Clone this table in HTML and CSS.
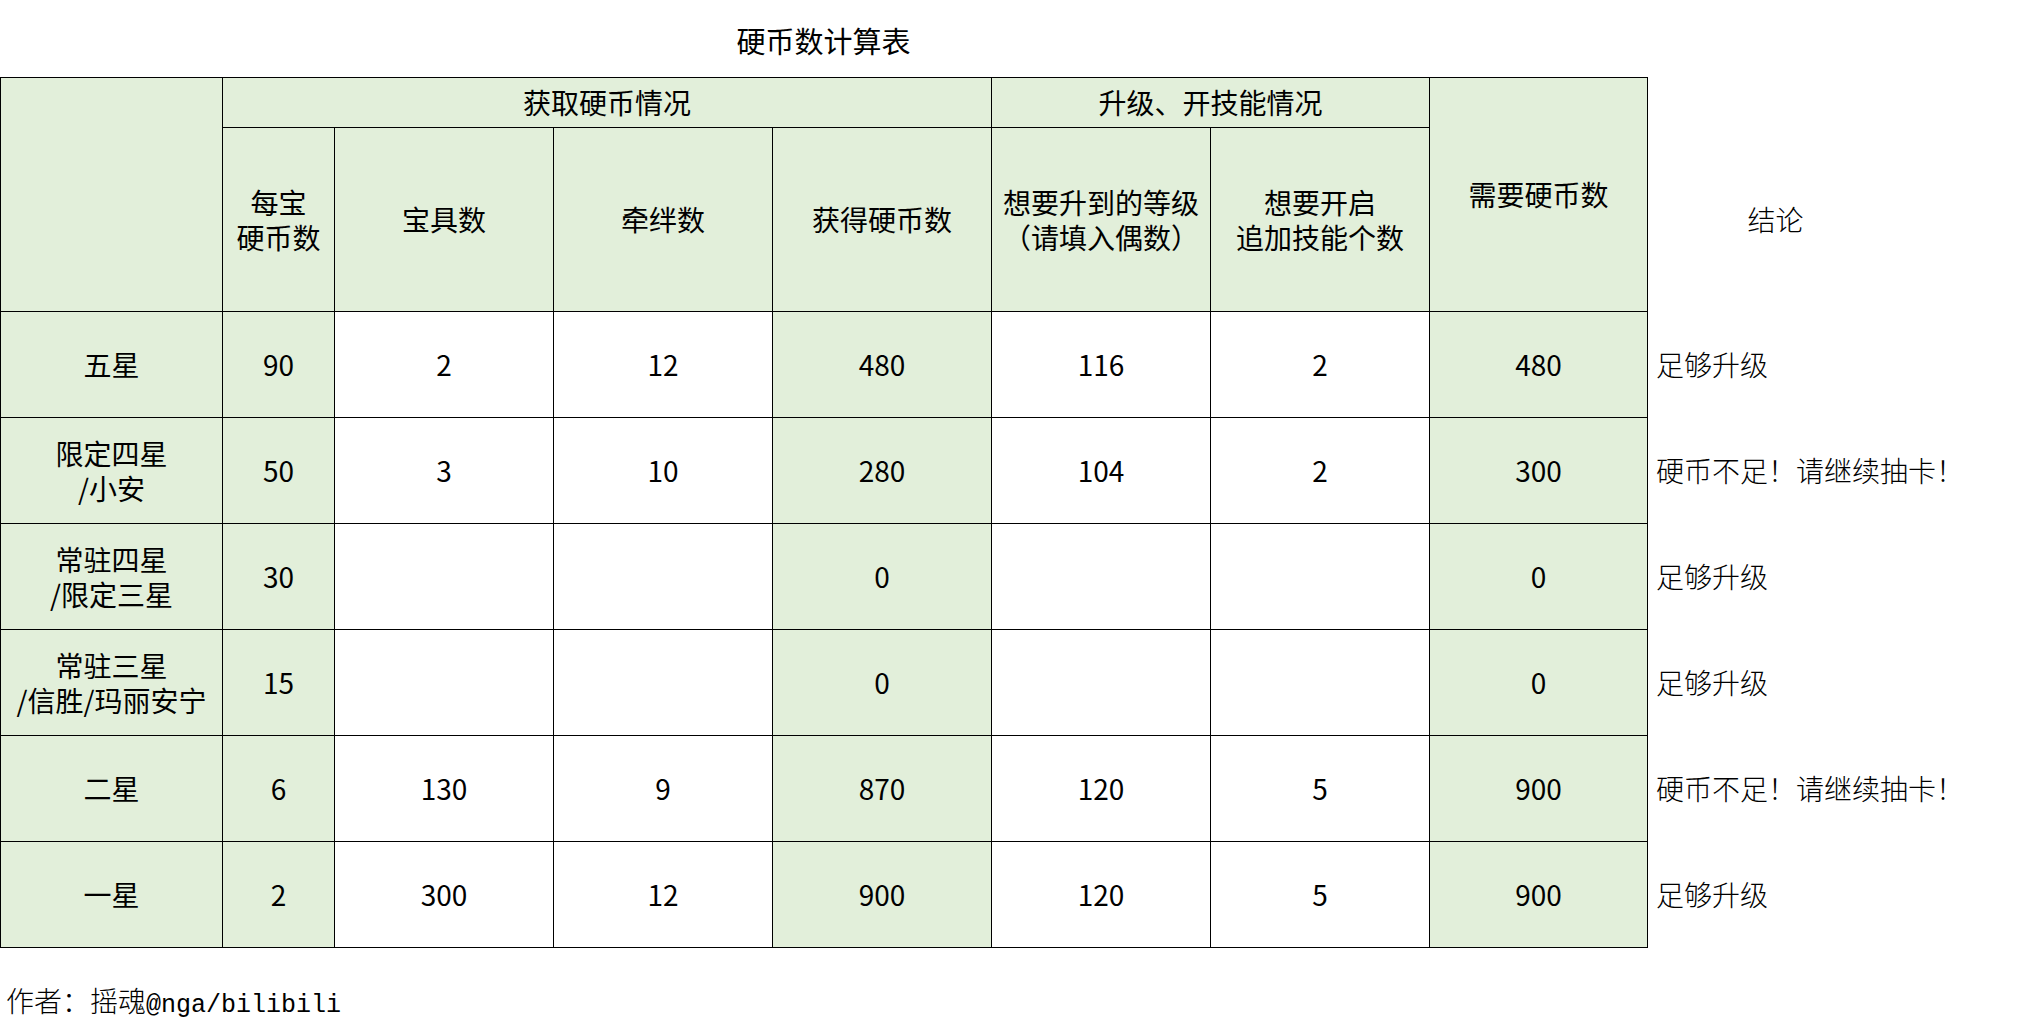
FILE: index.html
```html
<!DOCTYPE html>
<html lang="zh-CN">
<head>
<meta charset="utf-8">
<title>硬币数计算表</title>
<link rel="stylesheet" href="styles.css">
</head>
<body>
<div class="sheet">
  <div class="title">硬币数计算表</div>
  <table class="grid">
    <colgroup>
      <col class="w-label">
      <col class="w-per">
      <col class="w-std">
      <col class="w-std">
      <col class="w-std">
      <col class="w-std">
      <col class="w-std">
      <col class="w-need">
      <col class="w-note">
    </colgroup>
    <tr class="h1">
      <td class="b g" rowspan="2"></td>
      <td class="b g" colspan="4">获取硬币情况</td>
      <td class="b g" colspan="2">升级、开技能情况</td>
      <td class="b g" rowspan="2">需要硬币数</td>
      <td class="free"></td>
    </tr>
    <tr class="h2">
      <td class="b g">每宝<br>硬币数</td>
      <td class="b g">宝具数</td>
      <td class="b g">牵绊数</td>
      <td class="b g">获得硬币数</td>
      <td class="b g">想要升到的等级<br>（请填入偶数）</td>
      <td class="b g">想要开启<br>追加技能个数</td>
      <td class="free head-note">结论</td>
    </tr>
    <tr class="row">
      <td class="b g">五星</td>
      <td class="b g">90</td>
      <td class="b">2</td>
      <td class="b">12</td>
      <td class="b g">480</td>
      <td class="b">116</td>
      <td class="b">2</td>
      <td class="b g">480</td>
      <td class="free note">足够升级</td>
    </tr>
    <tr class="row">
      <td class="b g">限定四星<br>/小安</td>
      <td class="b g">50</td>
      <td class="b">3</td>
      <td class="b">10</td>
      <td class="b g">280</td>
      <td class="b">104</td>
      <td class="b">2</td>
      <td class="b g">300</td>
      <td class="free note">硬币不足！请继续抽卡！</td>
    </tr>
    <tr class="row">
      <td class="b g">常驻四星<br>/限定三星</td>
      <td class="b g">30</td>
      <td class="b"></td>
      <td class="b"></td>
      <td class="b g">0</td>
      <td class="b"></td>
      <td class="b"></td>
      <td class="b g">0</td>
      <td class="free note">足够升级</td>
    </tr>
    <tr class="row">
      <td class="b g">常驻三星<br>/信胜/玛丽安宁</td>
      <td class="b g">15</td>
      <td class="b"></td>
      <td class="b"></td>
      <td class="b g">0</td>
      <td class="b"></td>
      <td class="b"></td>
      <td class="b g">0</td>
      <td class="free note">足够升级</td>
    </tr>
    <tr class="row">
      <td class="b g">二星</td>
      <td class="b g">6</td>
      <td class="b">130</td>
      <td class="b">9</td>
      <td class="b g">870</td>
      <td class="b">120</td>
      <td class="b">5</td>
      <td class="b g">900</td>
      <td class="free note">硬币不足！请继续抽卡！</td>
    </tr>
    <tr class="row">
      <td class="b g">一星</td>
      <td class="b g">2</td>
      <td class="b">300</td>
      <td class="b">12</td>
      <td class="b g">900</td>
      <td class="b">120</td>
      <td class="b">5</td>
      <td class="b g">900</td>
      <td class="free note">足够升级</td>
    </tr>
  </table>
  <div class="author">作者：摇魂<span class="mono">@nga/bilibili</span></div>
</div>
</body>
</html>
```

FILE: styles.css
```css
html, body {
  margin: 0;
  padding: 0;
  background: #ffffff;
}

body {
  font-family: "Noto Sans CJK SC", "Noto Sans", sans-serif;
  color: #000000;
}

.sheet {
  width: 1903px;
}

.title {
  width: 1647px;
  height: 77px;
  box-sizing: border-box;
  padding-top: 20px;
  text-align: center;
  font-size: 29px;
  line-height: 40px;
}

.grid {
  width: 1903px;
  table-layout: fixed;
  border-collapse: collapse;
  border-spacing: 0;
}

.w-label { width: 222px; }
.w-per { width: 112px; }
.w-std { width: 219px; }
.w-need { width: 218px; }
.w-note { width: 256px; }

.grid td {
  padding: 0;
  text-align: center;
  vertical-align: middle;
  font-size: 28px;
  line-height: 35px;
  white-space: nowrap;
}

.grid td.b {
  border: 1px solid #000000;
  background: #ffffff;
}

.grid td.g {
  background: #e2efda;
}

.grid td.free {
  border: none;
  background: transparent;
}

.h1 { height: 50px; }
.h2 { height: 184px; }
.row { height: 106px; }

.grid td.head-note {
  font-weight: 300;
}

.grid td.note {
  text-align: left;
  padding-left: 8px;
  font-weight: 300;
  overflow: visible;
}

.author {
  margin-top: 35px;
  padding-left: 6px;
  font-size: 28px;
  line-height: 35px;
  font-weight: 300;
}

.mono {
  font-family: "Liberation Mono", "DejaVu Sans Mono", monospace;
  font-size: 25px;
}
```
